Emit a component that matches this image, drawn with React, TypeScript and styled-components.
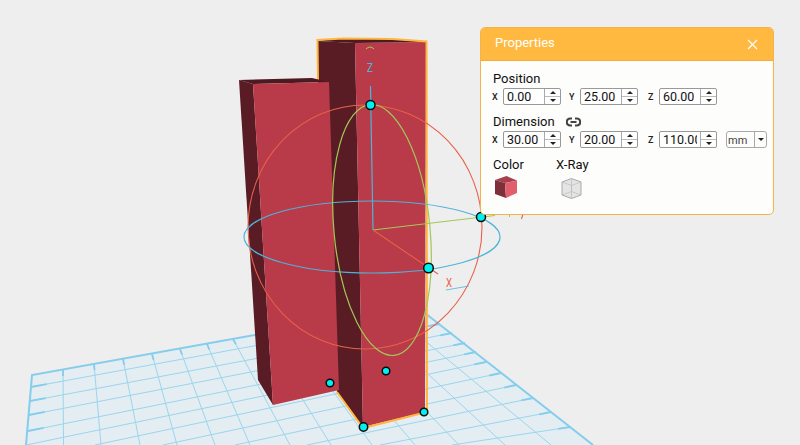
import React from 'react';
import styled, {createGlobalStyle} from 'styled-components';

const GlobalStyle = createGlobalStyle`
  html, body {
    margin: 0;
    height: 100%;
    background: #eeeeee;
    overflow: hidden;
    font-family: Roboto, "Liberation Sans", sans-serif;
  }
`;

const Stage = styled.div`
  position: relative;
  width: 800px;
  height: 445px;
  background: #eeeeee;
  overflow: hidden;
`;

const Scene = styled.svg`
  display: block;
  width: 800px;
  height: 445px;
`;

const Panel = styled.section`
  position: absolute;
  left: 480px;
  top: 27px;
  width: 292px;
  height: 186px;
  border: 1px solid #f6b24a;
  border-radius: 5px;
  background: #fdfdfb;
  overflow: hidden;
  color: #111;
  font-size: 13px;
`;

const Header = styled.header`
  display: flex;
  align-items: center;
  justify-content: space-between;
  height: 32px;
  padding: 0 15px 0 14px;
  background: #ffb941;
  border-bottom: 1px solid #f3ac3c;
  color: #fff;
`;

const Title = styled.h2`
  margin: 0 0 3px;
  font-size: 13px;
  font-weight: 400;
`;

const CloseButton = styled.button`
  display: flex;
  padding: 0;
  border: 0;
  background: none;
`;

const Body = styled.div`
  padding: 10px 7px 0 12px;
`;

const SectionLabel = styled.div`
  display: flex;
  align-items: center;
  gap: 11px;
  height: 16px;
  margin-bottom: 1px;
  line-height: 16px;
`;

const FieldRow = styled.div`
  display: flex;
  align-items: center;
  height: 17px;
  margin-bottom: 9px;
`;

const Axis = styled.span<{$width: number; $offset: number}>`
  width: ${p => p.$width}px;
  margin-left: ${p => p.$offset}px;
  flex: none;
  font-size: 9px;
  font-weight: 500;
  text-transform: uppercase;
  color: #222;
`;

const Field = styled.div`
  display: flex;
  width: 58px;
  height: 17px;
  flex: none;
  box-sizing: border-box;
  border: 1px solid #999;
  border-radius: 2px;
  background: #fff;
`;

const NumberInput = styled.input`
  width: 40px;
  min-width: 0;
  padding: 0 3px;
  box-sizing: border-box;
  border: 0;
  background: none;
  font: 12.5px Roboto, sans-serif;
  color: #111;
  outline: none;
`;

const Spinner = styled.div`
  flex: 1;
  display: flex;
  flex-direction: column;
  border-left: 1px solid #aaa;
`;

const SpinCell = styled.span`
  flex: 1;
  display: flex;
  align-items: center;
  justify-content: center;
  & + & {
    border-top: 1px solid #bbb;
  }
`;

const Arrow = styled.i<{$down?: boolean}>`
  width: 0;
  height: 0;
  border-left: 3px solid transparent;
  border-right: 3px solid transparent;
  border-${p => (p.$down ? 'top' : 'bottom')}: 3px solid #222;
`;

const UnitSelect = styled.div`
  display: flex;
  width: 41px;
  height: 17px;
  margin-left: 9px;
  flex: none;
  box-sizing: border-box;
  border: 1px solid #a8a8a8;
  border-radius: 3px;
  font-size: 11px;
  line-height: 17px;
  color: #444;
`;

const UnitText = styled.span`
  width: 26px;
  padding-left: 1px;
`;

const UnitArrow = styled.span`
  flex: 1;
  display: flex;
  align-items: center;
  justify-content: center;
  border-left: 1px solid #aaa;
`;

const Swatches = styled.div`
  display: flex;
`;

const Swatch = styled.div<{$width: number}>`
  display: flex;
  flex-direction: column;
  width: ${p => p.$width}px;
  line-height: 16px;
  gap: 3px;
`;

const ColorCube = styled.svg`
  margin-left: 2px;
`;

const XRayCube = styled.svg`
  margin: 2px 0 0 5px;
`;

type Seg = [number, number, number, number];

// floor grid, running back to front
const acrossLines: Seg[] = [
  [63, 370, 63.5, 445],
  [94, 364, 101, 445],
  [123, 359, 140, 445],
  [152, 354, 177, 445],
  [180, 349, 215, 445],
  [207, 344, 250, 445],
  [233, 339, 290, 445],
  [262, 334, 331, 445],
  [288, 329, 372, 445],
  [313, 325, 415, 445],
  [338, 320, 459, 445],
  [364, 315, 505, 445],
  [389, 311, 551, 445],
];

const alongLines: Seg[] = [
  [31, 387, 427, 314],
  [30, 401, 440, 324],
  [29, 415, 452, 333],
  [28, 431, 465, 343],
  [26, 445, 476, 352],
  [95, 445, 486, 362],
  [163, 445, 501, 373],
  [235, 445, 516, 385],
  [307, 445, 533, 398],
  [380, 445, 551, 412],
  [452, 445, 570, 427],
];

const tick = ([x1, y1, x2, y2]: Seg, size: number): Seg => {
  const t = size / Math.hypot(x2 - x1, y2 - y1);
  return [x1, y1, x1 + (x2 - x1) * t, y1 + (y2 - y1) * t];
};

const gridLines = () => {
  const thick: Seg[] = [
    ...acrossLines.map(l => tick(l, 6)),
    ...alongLines.filter(l => l[1] < 445).map(l => tick(l, 16)),
    ...alongLines.map(l => tick([l[2], l[3], l[0], l[1]], 12)),
  ];
  return (
    <>
      {[...acrossLines, ...alongLines].map((l, i) => (
        <line key={i} x1={l[0]} y1={l[1]} x2={l[2]} y2={l[3]} stroke="#9ad5ee" strokeWidth="1" />
      ))}
      {thick.map((l, i) => (
        <line key={'t' + i} x1={l[0]} y1={l[1]} x2={l[2]} y2={l[3]} stroke="#85cdec" strokeWidth="1.8" />
      ))}
    </>
  );
};

const handles: [number, number, number][] = [
  [370.5, 105, 4.5],
  [481, 217, 4.5],
  [428.5, 268, 4.8],
  [330, 383, 3.8],
  [386, 371, 3.8],
  [424, 412, 3.8],
  [363.5, 427, 4.2],
];

const NumberField = ({value}: {value: string}) => (
  <Field>
    <NumberInput readOnly value={value} />
    <Spinner>
      <SpinCell><Arrow /></SpinCell>
      <SpinCell><Arrow $down /></SpinCell>
    </Spinner>
  </Field>
);

const AxisFields = ({x, y, z}: {x: string; y: string; z: string}) => (
  <>
    <Axis $width={11} $offset={-1}>x</Axis>
    <NumberField value={x} />
    <Axis $width={11} $offset={8}>y</Axis>
    <NumberField value={y} />
    <Axis $width={11} $offset={10}>z</Axis>
    <NumberField value={z} />
  </>
);

const App = () => {
  return (
    <Stage>
      <GlobalStyle />
      <Scene viewBox="0 0 800 445">
        <polygon points="32,375 416,306 600,450 25.6,450" fill="#e4edf1" />
        {gridLines()}
        <polyline points="26,445 32,375 416,306 593,445" fill="none" stroke="#85cdec" strokeWidth="2" />

        <polygon points="318,41 355,43 363,427 337,392 318,90" fill="#5a1c24" />
        <polygon points="355,43 426,42 425,412 363,427" fill="#b93a48" />
        <polygon points="317,41 343,38 392,39 426,42 355,43" fill="#4c1a20" />
        <polyline
          points="318,80 317.5,40 343,38.5 392,39 426.5,41.5 427,412 363,428 337,392"
          fill="none"
          stroke="#ffb53f"
          strokeWidth="2"
        />

        <polygon points="239,80 253,84 273,405 258,380" fill="#5a1c24" />
        <polygon points="239,80 312,78 329,82 253,84" fill="#4c1a20" />
        <polygon points="253,84 329,82 339,390 273,405" fill="#b93a48" />

        <ellipse cx="365" cy="227" rx="117" ry="122" fill="none" stroke="#e8604a" strokeWidth="1.1" />
        <ellipse cx="372" cy="237" rx="128" ry="36" fill="none" stroke="#4fb3d9" strokeWidth="1.2" />
        <ellipse
          cx="382"
          cy="230"
          rx="48"
          ry="126"
          transform="rotate(-5.5 382 230)"
          fill="none"
          stroke="#a3c957"
          strokeWidth="1.2"
        />
        <line x1="373" y1="230" x2="370.5" y2="86" stroke="#4fb3d9" strokeWidth="1.2" />
        <line x1="373" y1="230" x2="495" y2="215.5" stroke="#a3c957" strokeWidth="1.2" />
        <line x1="373" y1="230" x2="438" y2="274" stroke="#e8604a" strokeWidth="1.1" />
        <line x1="509.5" y1="214" x2="509.5" y2="217" stroke="#a3c957" strokeWidth="1" />
        <line x1="523" y1="214" x2="521.5" y2="219" stroke="#e8604a" strokeWidth="1.1" />
        <path d="M366 49 Q370 45 374 49" fill="none" stroke="#a3c957" strokeWidth="1" />
        <text x="367" y="72" fontSize="13" fill="#4fb3d9" textLength="6" lengthAdjust="spacingAndGlyphs" fontFamily="Roboto, sans-serif">Z</text>
        <text x="446" y="287" fontSize="13" fill="#e8604a" textLength="6" lengthAdjust="spacingAndGlyphs" fontFamily="Roboto, sans-serif">X</text>
        <line x1="446" y1="290" x2="469" y2="286" stroke="#4fb3d9" strokeWidth="0.8" />

        {handles.map(([x, y, r], i) => (
          <circle key={i} cx={x} cy={y} r={r} fill="#00f0f0" stroke="#0a0a0a" strokeWidth="1.5" />
        ))}
      </Scene>

      <Panel>
        <Header>
          <Title>Properties</Title>
          <CloseButton>
            <svg width="11" height="11" viewBox="0 0 11 11">
              <path d="M1 1 L10 10 M10 1 L1 10" stroke="#fff" strokeWidth="1.2" />
            </svg>
          </CloseButton>
        </Header>
        <Body>
          <SectionLabel>Position</SectionLabel>
          <FieldRow>
            <AxisFields x="0.00" y="25.00" z="60.00" />
          </FieldRow>
          <SectionLabel>
            Dimension
            <svg width="15" height="10" viewBox="0 0 15 10">
              <path
                d="M6 1.5 H4.2 A3.5 3.5 0 0 0 4.2 8.5 H6 M9 1.5 H10.8 A3.5 3.5 0 0 1 10.8 8.5 H9 M4.5 5 H10.5"
                fill="none"
                stroke="#444"
                strokeWidth="2.2"
              />
            </svg>
          </SectionLabel>
          <FieldRow>
            <AxisFields x="30.00" y="20.00" z="110.00" />
            <UnitSelect>
              <UnitText>mm</UnitText>
              <UnitArrow>
                <Arrow $down />
              </UnitArrow>
            </UnitSelect>
          </FieldRow>
          <Swatches>
            <Swatch $width={63}>
              Color
              <ColorCube width="22" height="22" viewBox="0 0 22 22">
                <polygon points="11.5,0 22,4.5 10,7 0,4" fill="#a5404c" />
                <polygon points="0,4 10,7 11,22 0,18" fill="#7d303c" />
                <polygon points="10,7 22,4.5 22,17 11,22" fill="#e15f6d" />
              </ColorCube>
            </Swatch>
            <Swatch $width={60}>
              X-Ray
              <XRayCube width="21" height="21" viewBox="0 0 21 21">
                <polygon points="10.5,0.5 20,4 20,17 10.5,20.5 1,17 1,4" fill="#e4e4e4" stroke="#aaa" />
                <path
                  d="M1 4 L10.5 7.5 L20 4 M10.5 7.5 V20.5 M10.5 0.5 V13.5 M1 17 L10.5 13.5 L20 17"
                  fill="none"
                  stroke="#bbb"
                  strokeWidth="0.7"
                />
              </XRayCube>
            </Swatch>
          </Swatches>
        </Body>
      </Panel>
    </Stage>
  );
};

export default App;
